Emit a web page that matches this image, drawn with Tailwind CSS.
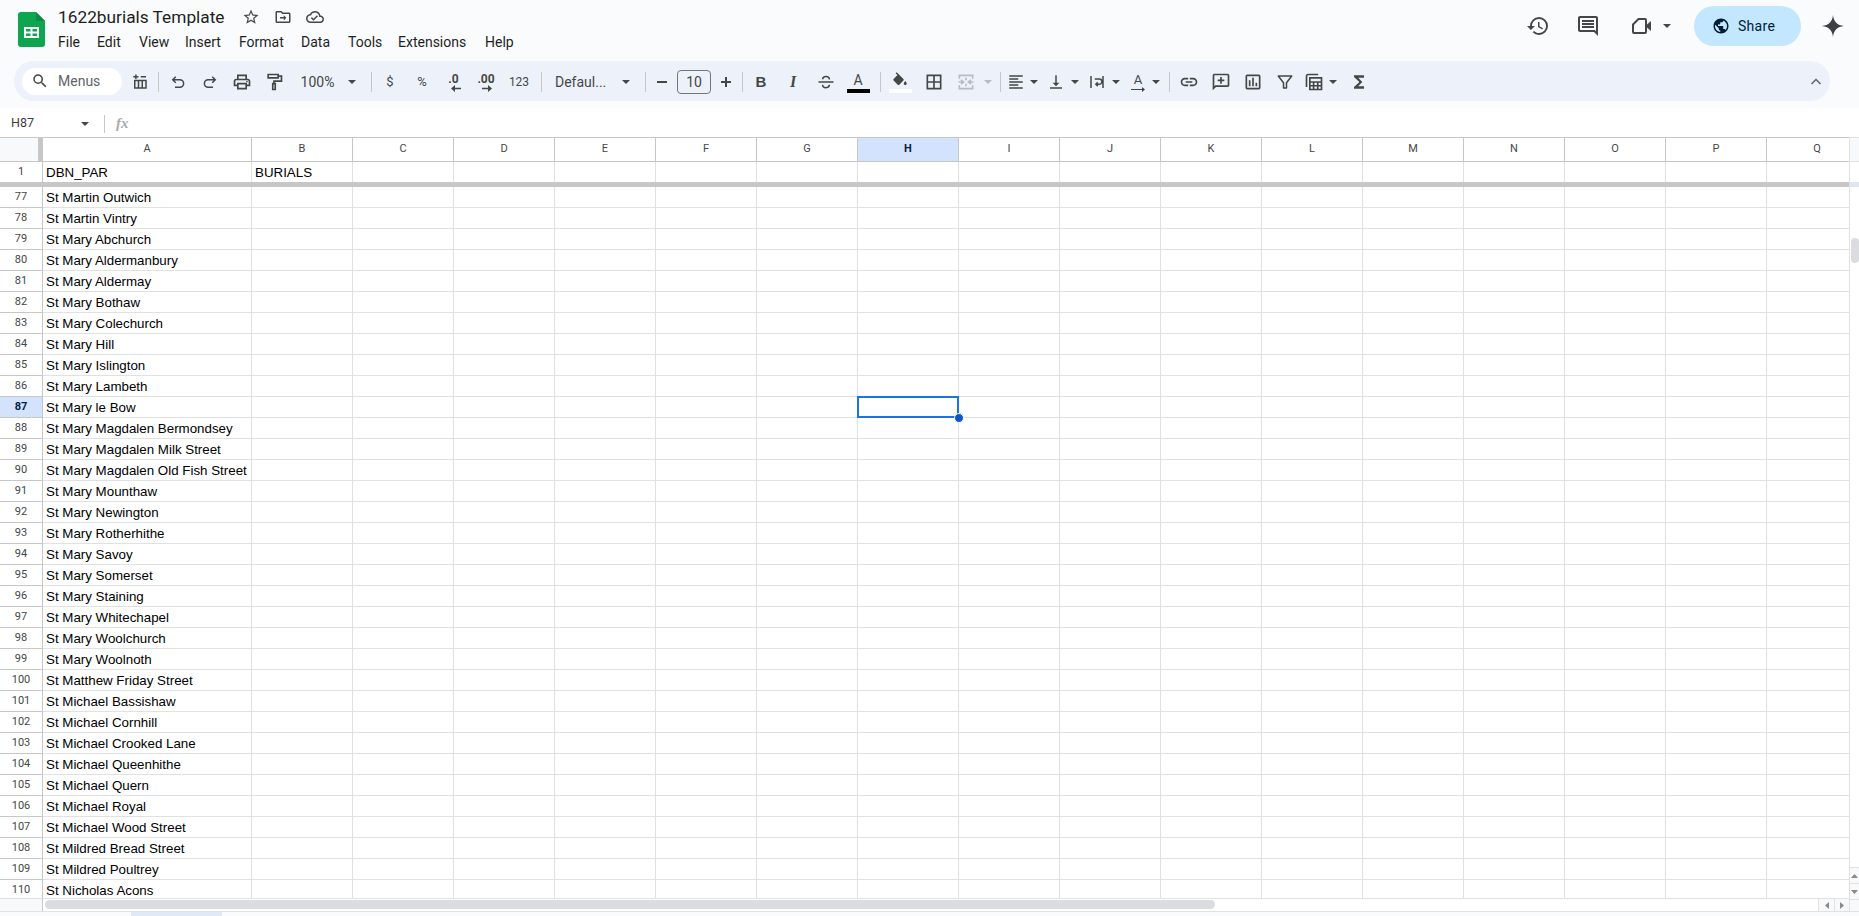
<!DOCTYPE html>
<html lang="en">
<head>
<meta charset="UTF-8">
<title>1622burials Template</title>
<script src="https://cdn.jsdelivr.net/npm/@tailwindcss/browser@4"></script>
</head>
<body class="bg-[#f9fbfd] font-['Roboto',sans-serif] text-[#444746]">
<div class="w-[1859px] h-[916px] overflow-hidden flex flex-col">

  <!-- title bar -->
  <div class="h-[61px] flex-none flex">
    <svg class="ml-[18px] mt-[12px] flex-none" width="27" height="35" viewBox="0 0 27 35">
      <path d="M3 0h15l9 9v23a3 3 0 0 1-3 3H3a3 3 0 0 1-3-3V3a3 3 0 0 1 3-3z" fill="#0da54f"/>
      <path d="M18 0l9 9h-9z" fill="#0b8a43"/>
      <path d="M6 15h15v11H6z" fill="#fff"/>
      <path d="M8 17h4.500v2.500H8zM14.500 17H19v2.500h-4.500zM8 21.500h4.500V24H8zM14.500 21.500H19V24h-4.500z" fill="#0da54f"/>
    </svg>
    <div class="ml-[13px] flex flex-col">
      <div class="flex items-center h-[24px] mt-[5px]">
        <span class="text-[17.3px] leading-[24px] text-[#1f1f1f] w-[167px] whitespace-nowrap">1622burials Template</span>
        <svg class="ml-[17px]" width="18" height="18" viewBox="0 0 24 24" fill="#444746"><path d="M22 9.240l-7.190-.620L12 2 9.190 8.630 2 9.240l5.460 4.730L5.820 21 12 17.270 18.180 21l-1.630-7.030L22 9.240zM12 15.400l-3.760 2.270 1-4.280-3.320-2.880 4.380-.380L12 6.100l1.710 4.040 4.380.380-3.320 2.880 1 4.280L12 15.400z"/></svg>
        <svg class="ml-[14px]" width="18" height="18" viewBox="0 0 24 24" fill="#444746"><path d="M20 6h-8l-2-2H4c-1.100 0-2 .9-2 2v12c0 1.100.9 2 2 2h16c1.100 0 2-.9 2-2V8c0-1.100-.9-2-2-2zm0 12H4V6h5.170l2 2H20v10z"/><path d="M8 12h5v-2.500l3.500 3.500-3.500 3.500V14H8z"/></svg>
        <svg class="ml-[14px]" width="18" height="18" viewBox="0 0 24 24" fill="#444746"><path d="M19.350 10.040C18.670 6.590 15.640 4 12 4 9.110 4 6.600 5.640 5.350 8.040 2.340 8.360 0 10.910 0 14c0 3.310 2.690 6 6 6h13c2.760 0 5-2.240 5-5 0-2.640-2.050-4.780-4.650-4.960zM19 18H6c-2.210 0-4-1.790-4-4 0-2.050 1.530-3.760 3.560-3.970l1.070-.11.5-.95C8.080 7.140 9.940 6 12 6c2.620 0 4.880 1.860 5.390 4.430l.3 1.500 1.530.11c1.560.1 2.780 1.410 2.780 2.960 0 1.650-1.350 3-3 3zm-9-3.820l-2.090-2.090L6.500 13.500 10 17l6.010-6.010-1.410-1.410z"/></svg>
      </div>
      <div class="flex h-[20px] mt-[3px] text-[14px] leading-[20px] text-[#1f1f1f]">
        <span class="w-[39px]">File</span>
        <span class="w-[42px]">Edit</span>
        <span class="w-[46px]">View</span>
        <span class="w-[54px]">Insert</span>
        <span class="w-[62px]">Format</span>
        <span class="w-[47px]">Data</span>
        <span class="w-[50px]">Tools</span>
        <span class="w-[87px]">Extensions</span>
        <span>Help</span>
      </div>
    </div>
    <div class="ml-auto flex items-center h-[52px]">
      <svg width="24" height="24" viewBox="0 0 24 24" fill="#444746"><path d="M13 3a9 9 0 0 0-9 9H1l3.890 3.890.07.14L9 12H6c0-3.870 3.130-7 7-7s7 3.130 7 7-3.130 7-7 7c-1.930 0-3.680-.79-4.940-2.060l-1.420 1.420A8.954 8.954 0 0 0 13 21a9 9 0 0 0 0-18zm-1 5v5l4.280 2.540.72-1.210-3.500-2.080V8H12z"/></svg>
      <svg class="ml-[26px]" width="24" height="24" viewBox="0 0 24 24" fill="#444746"><path d="M21.990 4c0-1.100-.89-2-1.990-2H4c-1.100 0-2 .9-2 2v12c0 1.100.9 2 2 2h14l4 4-.01-18zM20 4v13.170L18.830 16H4V4h16zM6 12h12v2H6zm0-3h12v2H6zm0-3h12v2H6z"/></svg>
      <svg class="ml-[30px]" width="24" height="24" viewBox="0 0 24 24" fill="none" stroke="#444746" stroke-width="2"><path d="M8.500 5H15a1 1 0 0 1 1 1v12a1 1 0 0 1-1 1H4a1 1 0 0 1-1-1v-7.500z" stroke-linejoin="round"/><path d="M17 10.500l4-3.500v10l-4-3.500z" fill="#444746" stroke="none"/></svg>
      <svg class="ml-[9px]" width="8" height="4" viewBox="0 0 8 4" fill="#444746"><path d="M0 0h8L4 4z"/></svg>
      <div class="ml-[23px] w-[107px] h-[40px] rounded-full bg-[#c2e7ff] flex items-center pl-[18px] text-[#001d35]">
        <svg width="18" height="18" viewBox="0 0 24 24" fill="#001d35"><path d="M12 2C6.480 2 2 6.480 2 12s4.480 10 10 10 10-4.480 10-10S17.520 2 12 2zm-1 17.930c-3.950-.49-7-3.850-7-7.930 0-.62.08-1.210.21-1.790L9 15v1c0 1.100.9 2 2 2v1.930zm6.900-2.540c-.26-.81-1-1.390-1.900-1.390h-1v-3c0-.55-.45-1-1-1H8v-2h2c.55 0 1-.45 1-1V7h2c1.100 0 2-.9 2-2v-.41c2.930 1.190 5 4.060 5 7.410 0 2.080-.8 3.970-2.100 5.390z"/></svg>
        <span class="ml-[8px] text-[14px] tracking-[0.3px]">Share</span>
      </div>
      <svg class="ml-[20px] mr-[14px]" width="24" height="24" viewBox="0 0 24 24" fill="#3c4043"><path d="M12 1C12.700 7.800 16.200 11.300 23 12 16.200 12.700 12.700 16.200 12 23 11.300 16.200 7.800 12.700 1 12 7.800 11.300 11.300 7.800 12 1z"/></svg>
    </div>
  </div>

  <!-- toolbar -->
  <div class="ml-[14px] w-[1816px] h-[40px] pt-[2px] flex-none rounded-full bg-[#edf2fa] flex items-center">
    <div class="ml-[8px] -mt-[2px] w-[100px] h-[27px] rounded-full bg-white flex items-center pl-[9px] flex-none">
      <svg width="18" height="18" viewBox="0 0 24 24" fill="#444746"><path d="M15.500 14h-.79l-.28-.27A6.470 6.470 0 0 0 16 9.500 6.500 6.500 0 1 0 9.500 16c1.610 0 3.090-.59 4.230-1.570l.27.28v.79l5 4.990L20.490 19l-4.990-5zm-6 0C7.010 14 5 11.990 5 9.500S7.010 5 9.500 5 14 7.010 14 9.500 11.990 14 9.500 14z"/></svg>
      <span class="ml-[9px] text-[14px] text-[#5f6368]">Menus</span>
    </div>
    <div class="ml-[2px] w-[32px] flex justify-center flex-none">
      <svg width="18" height="18" viewBox="0 0 24 24" fill="none" stroke="#444746" stroke-width="2"><path d="M5 10h15v10H5zM10 10v10M15 10v10M3 5h7M6.500 2v6M13 5h7"/></svg>
    </div>
    <div class="ml-[2px] w-px h-[20px] bg-[#c7c7c7] flex-none"></div>
    <div class="ml-[3px] w-[32px] flex justify-center flex-none">
      <svg width="18" height="18" viewBox="0 0 24 24" fill="none" stroke="#444746" stroke-width="2"><path d="M9 5 5 9l4 4M5 9h9.500a5 5 0 0 1 0 10H8"/></svg>
    </div>
    <div class="w-[32px] flex justify-center flex-none">
      <svg width="18" height="18" viewBox="0 0 24 24" fill="none" stroke="#444746" stroke-width="2"><path d="M15 5l4 4-4 4M19 9H9.500a5 5 0 0 0 0 10H16"/></svg>
    </div>
    <div class="w-[32px] flex justify-center flex-none">
      <svg width="20" height="20" viewBox="0 0 24 24" fill="#444746"><path d="M19 8h-1V3H6v5H5c-1.660 0-3 1.340-3 3v6h4v4h12v-4h4v-6c0-1.660-1.340-3-3-3zM8 5h8v3H8V5zm8 12v2H8v-4h8v2zm2-2v-2H6v2H4v-4c0-.55.45-1 1-1h14c.55 0 1 .45 1 1v4h-2z"/><circle cx="18" cy="11.500" r="1"/></svg>
    </div>
    <div class="w-[32px] flex justify-center flex-none">
      <svg width="20" height="20" viewBox="0 0 24 24" fill="none" stroke="#444746" stroke-width="2"><path d="M5 3h12v4H5zM18 5h3v6h-9v3M10.500 14h3v7h-3z"/></svg>
    </div>
    <div class="w-[55px] text-center text-[14px] flex-none">100%</div>
    <div class="w-[14px] flex justify-center flex-none"><svg width="8" height="4" viewBox="0 0 8 4" fill="#444746"><path d="M0 0h8L4 4z"/></svg></div>
    <div class="ml-[12px] w-px h-[20px] bg-[#c7c7c7] flex-none"></div>
    <div class="ml-[2px] w-[32px] text-center text-[13px] flex-none">$</div>
    <div class="w-[32px] text-center text-[13px] flex-none">%</div>
    <div class="w-[31px] flex justify-center flex-none">
      <div class="relative w-[18px] h-[20px] text-center text-[12px] leading-[14px] font-bold">.0<svg class="absolute left-[6px] top-[13px]" width="10" height="7" viewBox="0 0 10 7" fill="#444746"><path d="M10 2.700H4V0L0 3.500 4 7V4.300h6z"/></svg></div>
    </div>
    <div class="w-[34px] flex justify-center flex-none">
      <div class="relative w-[22px] h-[20px] text-center text-[12px] leading-[14px] font-bold">.00<svg class="absolute left-[7px] top-[13px]" width="10" height="7" viewBox="0 0 10 7" fill="#444746"><path d="M0 2.700h6V0l4 3.500L6 7V4.300H0z"/></svg></div>
    </div>
    <div class="w-[32px] text-center text-[12px] flex-none">123</div>
    <div class="ml-[6px] w-px h-[20px] bg-[#c7c7c7] flex-none"></div>
    <div class="ml-[13px] w-[57px] text-[14px] whitespace-nowrap flex-none">Defaul...</div>
    <div class="ml-[7px] w-[14px] flex justify-center flex-none"><svg width="8" height="4" viewBox="0 0 8 4" fill="#444746"><path d="M0 0h8L4 4z"/></svg></div>
    <div class="ml-[12px] w-px h-[20px] bg-[#c7c7c7] flex-none"></div>
    <div class="ml-[4px] w-[24px] flex justify-center flex-none"><div class="w-[10px] h-[2px] bg-[#444746]"></div></div>
    <div class="ml-[3px] w-[34px] h-[24px] border border-[#747775] rounded-[4px] text-center text-[14px] leading-[22px] text-[#444746] flex-none">10</div>
    <div class="ml-[3px] w-[24px] flex justify-center flex-none">
      <svg width="12" height="12" viewBox="0 0 12 12" fill="#444746"><path d="M5 1h2v4h4v2H7v4H5V7H1V5h4z"/></svg>
    </div>
    <div class="ml-[4px] w-px h-[20px] bg-[#c7c7c7] flex-none"></div>
    <div class="ml-[2px] w-[32px] text-center text-[15px] font-bold font-['Liberation_Sans',sans-serif] flex-none">B</div>
    <div class="w-[32px] text-center text-[16px] font-bold italic font-['Liberation_Serif',serif] flex-none">I</div>
    <div class="w-[33px] flex justify-center flex-none">
      <svg width="18" height="18" viewBox="0 0 24 24" fill="none" stroke="#444746" stroke-width="2"><path d="M2 12h20" /><path d="M16.500 8.500C16.500 6 14.500 4.500 12 4.500S7.500 6 7.500 8.200M7.500 15.500C7.500 18 9.500 19.500 12 19.500s4.500-1.500 4.500-3.700"/></svg>
    </div>
    <div class="w-[32px] flex flex-col items-center flex-none">
      <span class="text-[14px] leading-[16px] h-[16px]">A</span>
      <div class="w-[23px] h-[4px] bg-black mt-[1px]"></div>
    </div>
    <div class="ml-[6px] w-px h-[20px] bg-[#c7c7c7] flex-none"></div>
    <div class="ml-[3px] w-[32px] flex flex-col items-center flex-none">
      <svg width="18" height="17" viewBox="0 0 24 22" fill="#444746"><path d="M16.560 8.940L7.620 0 6.210 1.410l2.380 2.380-5.150 5.150c-.59.59-.59 1.540 0 2.120l5.500 5.500c.29.29.68.44 1.060.44s.77-.15 1.060-.44l5.500-5.500c.59-.58.59-1.530 0-2.120zM19 11.500s-2 2.170-2 3.500c0 1.100.9 2 2 2s2-.9 2-2c0-1.330-2-3.500-2-3.500z"/></svg>
      <div class="w-[23px] h-[4px] bg-white"></div>
    </div>
    <div class="ml-[2px] w-[32px] flex justify-center flex-none">
      <svg width="20" height="20" viewBox="0 0 24 24" fill="none" stroke="#444746" stroke-width="2"><path d="M4 4h16v16H4zM12 4v16M4 12h16"/></svg>
    </div>
    <div class="w-[32px] flex justify-center flex-none">
      <svg width="20" height="20" viewBox="0 0 24 24" fill="none" stroke="#b8bcc0" stroke-width="2"><path d="M4 8V4h16v4M4 16v4h16v-4M9 12H3M21 12h-6M6 9.500 9 12l-3 2.500M18 9.500 15 12l3 2.500M12 7v3M12 14v3"/></svg>
    </div>
    <div class="w-[12px] flex justify-center flex-none"><svg width="8" height="4" viewBox="0 0 8 4" fill="#b8bcc0"><path d="M0 0h8L4 4z"/></svg></div>
    <div class="ml-[6px] w-px h-[20px] bg-[#c7c7c7] flex-none"></div>
    <div class="ml-[3px] w-[24px] flex justify-center flex-none">
      <svg width="18" height="18" viewBox="0 0 24 24" fill="#444746"><path d="M3 3h18v2H3zM3 7h12v2H3zM3 11h18v2H3zM3 15h12v2H3zM3 19h18v2H3z"/></svg>
    </div>
    <div class="w-[12px] flex justify-center flex-none"><svg width="8" height="4" viewBox="0 0 8 4" fill="#444746"><path d="M0 0h8L4 4z"/></svg></div>
    <div class="ml-[4px] w-[24px] flex justify-center flex-none">
      <svg width="18" height="18" viewBox="0 0 24 24" fill="#444746"><path d="M11 3h2v10h3.500L12 17.500 7.500 13H11zM4 19h16v2H4z"/></svg>
    </div>
    <div class="ml-[1px] w-[12px] flex justify-center flex-none"><svg width="8" height="4" viewBox="0 0 8 4" fill="#444746"><path d="M0 0h8L4 4z"/></svg></div>
    <div class="ml-[4px] w-[24px] flex justify-center flex-none">
      <svg width="18" height="18" viewBox="0 0 24 24" fill="none" stroke="#444746" stroke-width="2"><path d="M4 4v16M20 4v16M9 8h6a2.500 2.500 0 0 1 0 7h-3M13 12.500 10.500 15l2.500 2.500"/></svg>
    </div>
    <div class="ml-[1px] w-[12px] flex justify-center flex-none"><svg width="8" height="4" viewBox="0 0 8 4" fill="#444746"><path d="M0 0h8L4 4z"/></svg></div>
    <div class="ml-[4px] w-[24px] flex flex-col items-center flex-none">
      <span class="text-[13px] leading-[14px] h-[14px]">A</span>
      <svg width="14" height="5" viewBox="0 0 14 5" fill="#444746"><path d="M0 2h11V0l3 2.500L11 5V3H0z"/></svg>
    </div>
    <div class="w-[12px] flex justify-center flex-none"><svg width="8" height="4" viewBox="0 0 8 4" fill="#444746"><path d="M0 0h8L4 4z"/></svg></div>
    <div class="ml-[7px] w-px h-[20px] bg-[#c7c7c7] flex-none"></div>
    <div class="ml-[3px] w-[32px] flex justify-center flex-none">
      <svg width="20" height="20" viewBox="0 0 24 24" fill="#444746"><path d="M3.900 12c0-1.710 1.390-3.100 3.100-3.100h4V7H7c-2.760 0-5 2.240-5 5s2.240 5 5 5h4v-1.900H7c-1.710 0-3.100-1.390-3.100-3.100zM8 13h8v-2H8v2zm9-6h-4v1.900h4c1.710 0 3.100 1.390 3.100 3.100s-1.390 3.100-3.100 3.100h-4V17h4c2.760 0 5-2.240 5-5s-2.240-5-5-5z"/></svg>
    </div>
    <div class="w-[32px] flex justify-center flex-none">
      <svg width="20" height="20" viewBox="0 0 24 24" fill="#444746"><path d="M22 4c0-1.100-.9-2-2-2H4c-1.100 0-2 .9-2 2v18l4-4h14c1.100 0 2-.9 2-2V4zm-2 12H5.170L4 17.170V4h16v12zM11 6h2v3h3v2h-3v3h-2v-3H8V9h3z"/></svg>
    </div>
    <div class="w-[32px] flex justify-center flex-none">
      <svg width="20" height="20" viewBox="0 0 24 24" fill="#444746"><path d="M5 3h14a2 2 0 0 1 2 2v14a2 2 0 0 1-2 2H5a2 2 0 0 1-2-2V5a2 2 0 0 1 2-2zm0 2v14h14V5zM7 10h2v7H7zM11 7h2v10h-2zM15 13h2v4h-2z"/></svg>
    </div>
    <div class="w-[32px] flex justify-center flex-none">
      <svg width="18" height="18" viewBox="0 0 24 24" fill="none" stroke="#444746" stroke-width="2"><path d="M3 4h18l-7 9v7h-4v-7z" stroke-linejoin="round"/></svg>
    </div>
    <div class="w-[26px] flex justify-center flex-none">
      <svg width="20" height="20" viewBox="0 0 24 24" fill="none" stroke="#444746" stroke-width="2"><path d="M3 18V5a2 2 0 0 1 2-2h12M7 7h14v14H7zM7 12h14M11.500 12v9M16.500 12v9M7 16.500h14"/></svg>
    </div>
    <div class="w-[12px] flex justify-center flex-none"><svg width="8" height="4" viewBox="0 0 8 4" fill="#444746"><path d="M0 0h8L4 4z"/></svg></div>
    <div class="ml-[4px] w-[32px] flex justify-center flex-none">
      <svg width="20" height="20" viewBox="0 0 24 24" fill="#444746"><path d="M18 4H6v2l6.500 6L6 18v2h12v-3h-7l5-5-5-5h7z"/></svg>
    </div>
    <div class="ml-auto mr-[2px] w-[24px] flex justify-center flex-none">
      <svg width="12" height="12" viewBox="0 0 24 24" fill="none" stroke="#5f6368" stroke-width="3"><path d="M3 16l9-9 9 9"/></svg>
    </div>
  </div>

  <div class="h-[7px] flex-none"></div>

  <!-- formula bar -->
  <div class="h-[29px] pt-[2px] flex-none bg-white flex items-center">
    <span class="ml-[11px] w-[70px] text-[12.5px] text-[#3c4043]">H87</span>
    <svg width="8" height="4" viewBox="0 0 8 4" fill="#444746"><path d="M0 0h8L4 4z"/></svg>
    <div class="ml-[15px] w-px h-[18px] bg-[#c7c7c7]"></div>
    <span class="ml-[11px] text-[15px] font-bold italic font-['Liberation_Serif',serif] text-[#a8abae]">fx</span>
  </div>

  <!-- sheet -->
  <div class="flex-1 min-h-0 flex bg-white">
    <div class="w-[1849px] flex-none flex flex-col">
      <div class="flex-1 min-h-0 overflow-hidden relative font-['Liberation_Sans',sans-serif]">
        <div id="frozen"></div>
        <div id="rows"></div>
        <!-- selected cell -->
        <div class="absolute left-[857px] top-[259px] w-[102px] h-[22px] border-2 border-[#1a73e8]"></div>
        <div class="absolute left-[954px] top-[276px] w-[10px] h-[10px] rounded-full bg-[#0b57d0] border border-white"></div>
      </div>
      <!-- horizontal scrollbar -->
      <div class="h-[14px] flex-none flex border-y border-[#e1e1e1] bg-white">
        <div class="w-[43px] bg-[#f8f9fa] border-r border-[#c7c7c7]"></div>
        <div class="ml-[2px] mt-[1px] w-[1170px] h-[9px] rounded-full bg-[#dadce0]"></div>
        <div class="ml-auto w-[16px] bg-[#f8f9fa] border-l border-[#e1e1e1] flex items-center justify-center">
          <svg width="4" height="7" viewBox="0 0 4 7" fill="#8a8a8a"><path d="M4 0v7L0 3.500z"/></svg>
        </div>
        <div class="w-[15px] bg-[#f8f9fa] border-l border-[#e1e1e1] flex items-center justify-center">
          <svg width="4" height="7" viewBox="0 0 4 7" fill="#8a8a8a"><path d="M0 0v7l4-3.500z"/></svg>
        </div>
      </div>
    </div>
    <!-- vertical scrollbar -->
    <div class="flex-1 flex flex-col border-l border-[#e1e1e1]">
      <div class="h-[25px] bg-[#f8f9fa] border-y border-[#e1e1e1] flex-none"></div>
      <div class="h-[20px] flex-none"></div>
      <div class="h-[5px] bg-[#dfe6f0] flex-none"></div>
      <div class="mt-[51px] ml-[1px] h-[25px] w-[8px] rounded-full bg-[#dadce0] flex-none"></div>
      <div class="mt-auto h-[16px] bg-[#f8f9fa] border-t border-[#e1e1e1] flex items-center justify-center flex-none">
        <svg width="7" height="4" viewBox="0 0 7 4" fill="#8a8a8a"><path d="M0 4h7L3.500 0z"/></svg>
      </div>
      <div class="h-[16px] bg-[#f8f9fa] border-t border-[#e1e1e1] flex items-center justify-center flex-none">
        <svg width="7" height="4" viewBox="0 0 7 4" fill="#8a8a8a"><path d="M0 0h7L3.500 4z"/></svg>
      </div>
      <div class="h-[13px] bg-[#f8f9fa] border-y border-[#e1e1e1] flex-none"></div>
    </div>
  </div>

  <!-- bottom strip -->
  <div class="h-[4px] flex-none bg-[#f9fbfd] pl-[131px]">
    <div class="w-[91px] h-full bg-[#e1e9f7]"></div>
  </div>
</div>

<script>
  const letters = 'ABCDEFGHIJKLMNOPQ'.split('');
  const names = ['St Martin Outwich','St Martin Vintry','St Mary Abchurch','St Mary Aldermanbury','St Mary Aldermay','St Mary Bothaw','St Mary Colechurch','St Mary Hill','St Mary Islington','St Mary Lambeth','St Mary le Bow','St Mary Magdalen Bermondsey','St Mary Magdalen Milk Street','St Mary Magdalen Old Fish Street','St Mary Mounthaw','St Mary Newington','St Mary Rotherhithe','St Mary Savoy','St Mary Somerset','St Mary Staining','St Mary Whitechapel','St Mary Woolchurch','St Mary Woolnoth','St Matthew Friday Street','St Michael Bassishaw','St Michael Cornhill','St Michael Crooked Lane','St Michael Queenhithe','St Michael Quern','St Michael Royal','St Michael Wood Street','St Mildred Bread Street','St Mildred Poultrey','St Nicholas Acons'];

  function colWidth(i) { return i === 0 ? 'w-[209px]' : 'w-[101px]'; }

  // column header, row 1 and the freeze bar
  let frozen = `<div class="flex h-[25px] border-y border-[#c7c7c7] font-['Roboto',sans-serif] text-[11px] text-[#444746]">`;
  frozen += '<div class="w-[43px] flex-none bg-[#f8f9fa] border-r-[5px] border-[#c7c7c7]"></div>';
  letters.forEach((l, i) => {
    const sel = l === 'H' ? 'bg-[#d3e3fd] font-bold text-[#041e49]' : 'bg-white';
    frozen += `<div class="${colWidth(i)} flex-none flex items-center justify-center border-r border-[#c7c7c7] ${sel}">${l}</div>`;
  });
  frozen += '</div>';
  frozen += '<div class="flex h-[20px] text-[13.33px] text-black">';
  frozen += `<div class="w-[43px] flex-none flex items-center justify-center border-r border-[#c7c7c7] font-['Roboto',sans-serif] text-[11px] text-[#444746]">1</div>`;
  letters.forEach((l, i) => {
    const text = i === 0 ? 'DBN_PAR' : i === 1 ? 'BURIALS' : '';
    frozen += `<div class="${colWidth(i)} flex-none flex items-center pl-[3px] pt-[2px] border-r border-[#e1e1e1]">${text}</div>`;
  });
  frozen += '</div><div class="h-[5px] bg-[#c7c7c7]"></div>';
  document.getElementById('frozen').innerHTML = frozen;

  // rows 77 to 110
  let html = '';
  names.forEach((name, r) => {
    const num = 77 + r;
    const head = num === 87 ? 'bg-[#d3e3fd] font-bold text-[#041e49]' : 'text-[#444746]';
    html += '<div class="flex h-[21px] text-[13.33px] text-black">';
    html += `<div class="w-[43px] flex-none flex items-center justify-center border-r border-b border-[#c7c7c7] font-['Roboto',sans-serif] text-[11px] ${head}">${num}</div>`;
    letters.forEach((l, i) => {
      const text = i === 0 ? name : '';
      html += `<div class="${colWidth(i)} flex-none flex items-center pl-[3px] pt-[2px] whitespace-nowrap overflow-hidden border-r border-b border-[#e1e1e1]">${text}</div>`;
    });
    html += '</div>';
  });
  document.getElementById('rows').innerHTML = html;
</script>
</body>
</html>
